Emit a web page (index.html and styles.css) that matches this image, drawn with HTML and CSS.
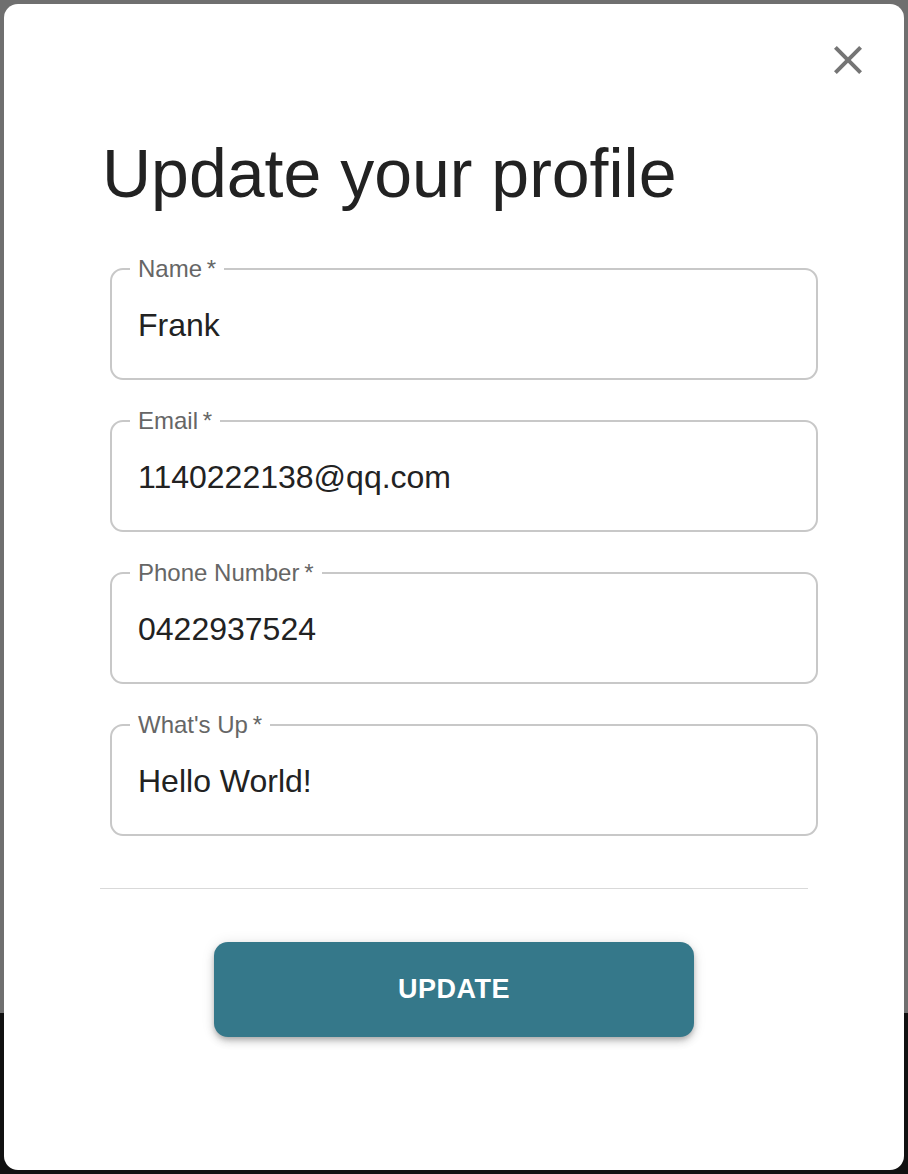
FILE: index.html
```html
<!DOCTYPE html>
<html lang="en">
<head>
<meta charset="utf-8">
<title>Update your profile</title>
<link rel="stylesheet" href="styles.css">
</head>
<body>
<div class="backdrop">
  <div class="modal">
    <button class="close" aria-label="Close">
      <svg viewBox="0 0 24 24" width="48" height="48"><path d="M19 6.41 17.59 5 12 10.59 6.41 5 5 6.41 10.59 12 5 17.59 6.41 19 12 13.41 17.59 19 19 17.59 13.41 12z" fill="#757575"/></svg>
    </button>
    <h1 class="title">Update your profile</h1>
    <form class="form">
      <fieldset class="field">
        <legend class="label">Name&thinsp;*</legend>
        <div class="value">Frank</div>
      </fieldset>
      <fieldset class="field">
        <legend class="label">Email&thinsp;*</legend>
        <div class="value">1140222138@qq.com</div>
      </fieldset>
      <fieldset class="field">
        <legend class="label">Phone Number&thinsp;*</legend>
        <div class="value">0422937524</div>
      </fieldset>
      <fieldset class="field">
        <legend class="label">What's Up&thinsp;*</legend>
        <div class="value">Hello World!</div>
      </fieldset>
    </form>
    <hr class="divider">
    <div class="actions">
      <button class="update" type="button">UPDATE</button>
    </div>
  </div>
</div>
</body>
</html>
```
FILE: styles.css
```css
html, body {
  margin: 0;
  padding: 0;
}
body {
  font-family: "Liberation Sans", Arial, sans-serif;
  background: linear-gradient(to bottom, #6f6f6f 0, #6f6f6f 1013px, #111111 1013px, #111111 100%);
  min-height: 1174px;
}
.backdrop {
  padding: 4px;
}
.modal {
  position: relative;
  box-sizing: border-box;
  height: 1166px;
  background: #ffffff;
  border-radius: 14px;
  padding: 135px 96px 0 96px;
}
.close {
  position: absolute;
  top: 32px;
  right: 32px;
  width: 48px;
  height: 48px;
  padding: 0;
  border: 0;
  background: transparent;
  display: flex;
}
.title {
  margin: 0 0 50px 2px;
  font-size: 68px;
  line-height: 68px;
  font-weight: 400;
  color: #222222;
}
.form {
  display: flex;
  flex-direction: column;
  gap: 29px;
  margin-left: 10px;
}
.field {
  box-sizing: border-box;
  width: 708px;
  min-width: 0;
  margin: 0;
  border: 2px solid #c8c8c8;
  border-radius: 13px;
  padding: 26px 24px 34px 18px;
}
.label {
  padding: 0 8px 0 8px;
  font-size: 24px;
  line-height: 24px;
  color: #666666;
}
.value {
  padding-left: 8px;
  font-size: 32px;
  line-height: 37px;
  color: #222222;
}
.divider {
  margin: 52px 0 0 0;
  border: 0;
  height: 1px;
  background: #d9d9d9;
  width: 708px;
}
.actions {
  display: flex;
  justify-content: center;
  margin-top: 53px;
}
.update {
  width: 480px;
  height: 95px;
  border: 0;
  border-radius: 14px;
  background: #35788a;
  color: #ffffff;
  font-family: "Liberation Sans", Arial, sans-serif;
  font-weight: 700;
  font-size: 27px;
  letter-spacing: 0.5px;
  box-shadow: 0 3px 5px -1px rgba(0,0,0,0.2), 0 5px 8px 0 rgba(0,0,0,0.14), 0 1px 14px 0 rgba(0,0,0,0.1);
}
```
